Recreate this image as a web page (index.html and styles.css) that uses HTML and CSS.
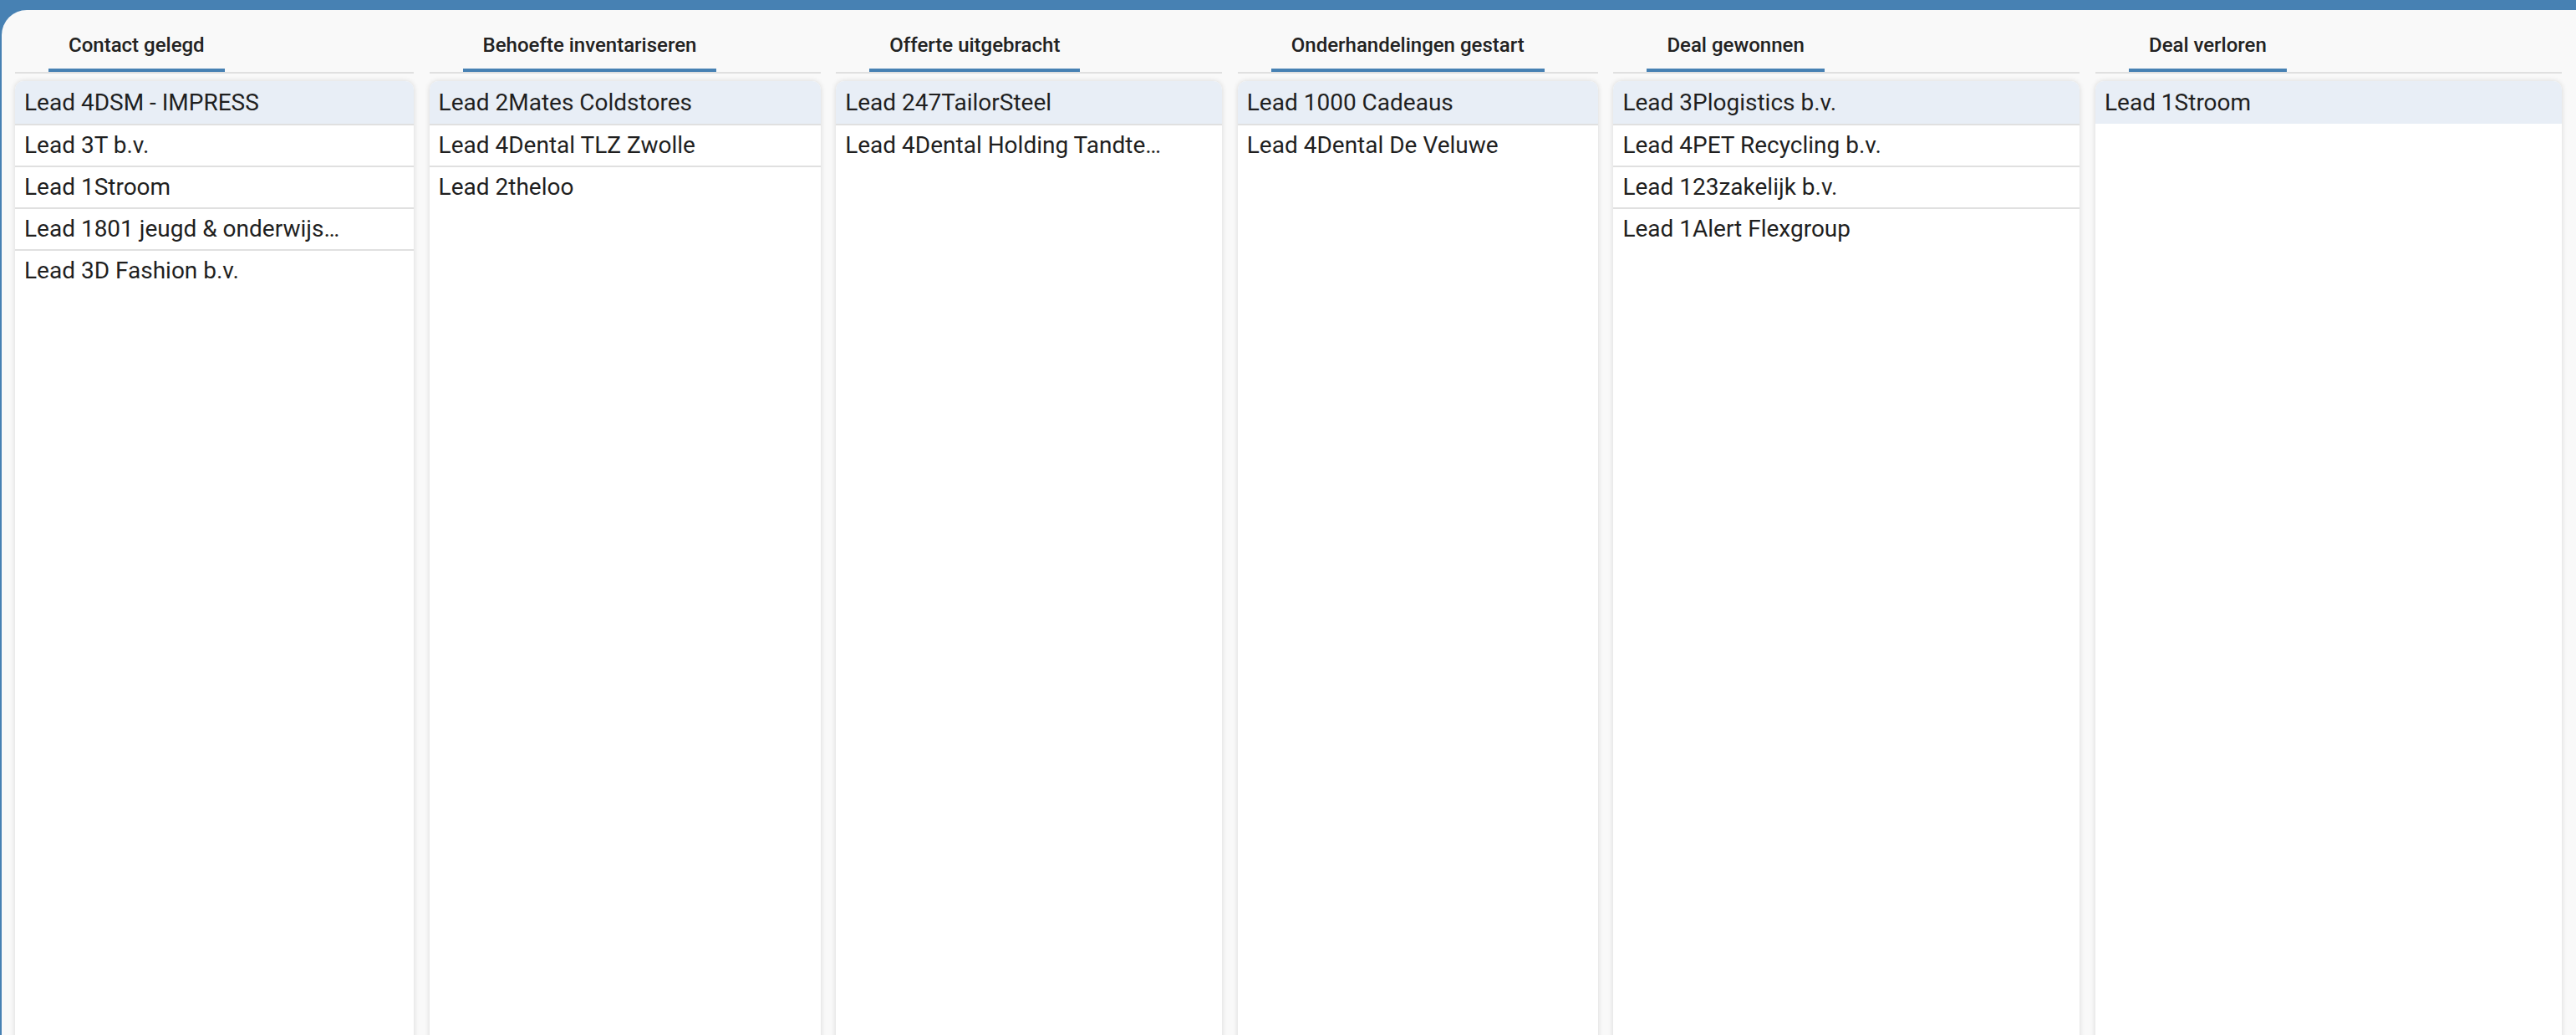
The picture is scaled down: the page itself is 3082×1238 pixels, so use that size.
FILE: index.html
```html
<!DOCTYPE html>
<html lang="nl">
<head>
<meta charset="UTF-8" />
<title>Leads pipeline</title>
<link rel="stylesheet" href="styles.css">
</head>
<body>

<div id="board">

  <!-- Contact gelegd -->
  <div class="column col-contact">
    <div class="colHeader"><span class="tab">Contact gelegd</span></div>
    <div class="card">
      <div class="lead active">Lead 4DSM - IMPRESS</div>
      <div class="lead">Lead 3T b.v.</div>
      <div class="lead">Lead 1Stroom</div>
      <div class="lead">Lead 1801 jeugd &amp; onderwijs…</div>
      <div class="lead last">Lead 3D Fashion b.v.</div>
    </div>
  </div>

  <!-- Behoefte inventariseren -->
  <div class="column col-behoefte">
    <div class="colHeader"><span class="tab">Behoefte inventariseren</span></div>
    <div class="card">
      <div class="lead active">Lead 2Mates Coldstores</div>
      <div class="lead">Lead 4Dental TLZ Zwolle</div>
      <div class="lead last">Lead 2theloo</div>
    </div>
  </div>

  <!-- Offerte uitgebracht -->
  <div class="column col-offerte">
    <div class="colHeader"><span class="tab">Offerte uitgebracht</span></div>
    <div class="card">
      <div class="lead active">Lead 247TailorSteel</div>
      <div class="lead last">Lead 4Dental Holding Tandte…</div>
    </div>
  </div>

  <!-- Onderhandelingen gestart -->
  <div class="column col-onderhandeling">
    <div class="colHeader"><span class="tab">Onderhandelingen gestart</span></div>
    <div class="card">
      <div class="lead active">Lead 1000 Cadeaus</div>
      <div class="lead last">Lead 4Dental De Veluwe</div>
    </div>
  </div>

  <!-- Deal gewonnen -->
  <div class="column col-gewonnen">
    <div class="colHeader"><span class="tab">Deal gewonnen</span></div>
    <div class="card">
      <div class="lead active">Lead 3Plogistics b.v.</div>
      <div class="lead">Lead 4PET Recycling b.v.</div>
      <div class="lead">Lead 123zakelijk b.v.</div>
      <div class="lead last">Lead 1Alert Flexgroup</div>
    </div>
  </div>

  <!-- Deal verloren -->
  <div class="column col-verloren">
    <div class="colHeader"><span class="tab">Deal verloren</span></div>
    <div class="card">
      <div class="lead active last">Lead 1Stroom</div>
    </div>
  </div>

</div>

</body>
</html>
```

FILE: styles.css
```css
html, body {
  height: 100%;
}
body {
  margin: 0;
  background: #4781b3;
  font-family: Roboto, "Liberation Sans", Arial, sans-serif;
  color: #222;
  overflow: hidden;
}

/* Board */
#board {
  margin: 12px 0 0 2px;
  height: calc(100vh - 12px);
  background: #f9f9f9;
  border-top-left-radius: 30px;
  display: flex;
  gap: 18.6px;
  padding-left: 16px;
  box-sizing: border-box;
  overflow: hidden;
}

/* Columns */
.column {
  display: flex;
  flex-direction: column;
  flex: none;
}
.col-contact { width: 477px; }
.col-behoefte { width: 468px; }
.col-offerte { width: 462px; }
.col-onderhandeling { width: 431px; }
.col-gewonnen { width: 558px; }
.col-verloren { width: 558px; }

.colHeader {
  padding-top: 28px;
  border-bottom: 2px solid #e0e0e0;
}
.colHeader .tab {
  display: inline-block;
  margin-left: 40px;
  padding: 0 24px 14px 24px;
  border-bottom: 4px solid #4781b3;
  font-size: 24px;
  line-height: 28px;
  font-weight: 500;
  color: #222;
  margin-bottom: -0px;
}

/* Cards */
.card {
  margin-top: 9px;
  min-height: 1300px;
  background: #fff;
  border-radius: 10px;
  box-shadow: 0 0 6px rgba(0, 0, 0, 0.14);
  overflow: hidden;
  padding-top: 1px;
}
.lead {
  padding: 0 11px;
  height: 48px;
  line-height: 48px;
  font-size: 28px;
  white-space: nowrap;
  border-bottom: 2px solid #e0e0e0;
  color: #1f1f1f;
}
.lead.active {
  background: #e8eef6;
  margin-top: -1px;
  padding-top: 1px;
  height: 50px;
  line-height: 50px;
}
.lead.last.active {
  border-bottom: none;
}
.lead.last {
  border-bottom: none;
}
```
